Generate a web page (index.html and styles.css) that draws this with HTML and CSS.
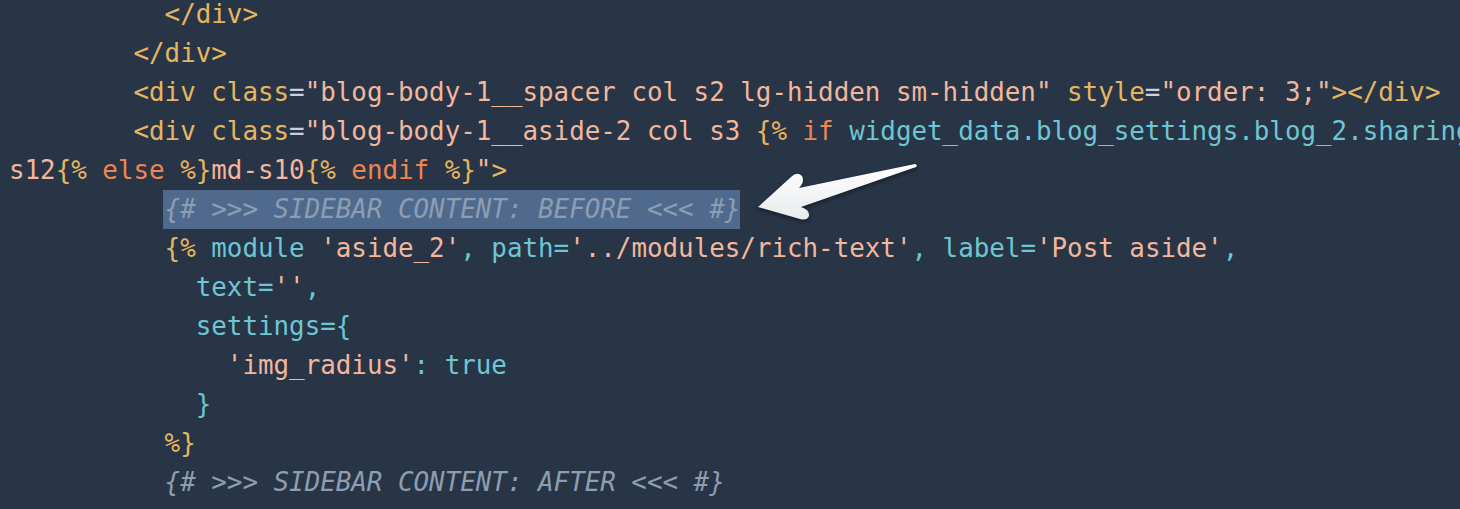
FILE: index.html
```html
<!DOCTYPE html>
<html>
<head>
<meta charset="utf-8">
<link rel="stylesheet" href="styles.css">
</head>
<body>
<div class="editor">
  <pre class="code"><div class="line">          <span class="t">&lt;/div&gt;</span></div><div class="line">        <span class="t">&lt;/div&gt;</span></div><div class="line">        <span class="t">&lt;div class</span><span class="p">=</span><span class="s">"blog-body-1__spacer col s2 lg-hidden sm-hidden"</span> <span class="t">style</span><span class="p">=</span><span class="s">"order: 3;"</span><span class="t">&gt;&lt;/div&gt;</span></div><div class="line">        <span class="t">&lt;div class</span><span class="p">=</span><span class="s">"blog-body-1__aside-2 col s3 </span><span class="t">{%</span><span class="k"> if </span><span class="c">widget_data.blog_settings.blog_2.sharing_enabled %}md-</span></div><div class="line"><span class="s">s12</span><span class="t">{%</span><span class="k"> else </span><span class="t">%}</span><span class="s">md-s10</span><span class="t">{%</span><span class="k"> endif </span><span class="t">%}</span><span class="s">"</span><span class="t">&gt;</span></div><div class="line">          <span class="cm hl">{# &gt;&gt;&gt; SIDEBAR CONTENT: BEFORE &lt;&lt;&lt; #}</span></div><div class="line">          <span class="t">{%</span><span class="c"> module </span><span class="s">'aside_2'</span><span class="c">, path=</span><span class="s">'../modules/rich-text'</span><span class="c">, label=</span><span class="s">'Post aside'</span><span class="c">,</span></div><div class="line">            <span class="c">text=</span><span class="s">''</span><span class="c">,</span></div><div class="line">            <span class="c">settings={</span></div><div class="line">              <span class="s">'img_radius'</span><span class="c">: true</span></div><div class="line">            <span class="c">}</span></div><div class="line">          <span class="t">%}</span></div><div class="line">          <span class="cm">{# &gt;&gt;&gt; SIDEBAR CONTENT: AFTER &lt;&lt;&lt; #}</span></div></pre>
  <svg class="arrow" width="1460" height="509" viewBox="0 0 1460 509" aria-hidden="true">
    <defs>
      <linearGradient id="ag" x1="0" y1="0" x2="0" y2="1">
        <stop offset="0" stop-color="#ffffff"/>
        <stop offset="1" stop-color="#e9ebee"/>
      </linearGradient>
    </defs>
    <path d="M758,207 L791,177 Q797,171 802,176 Q805,182 799,188 L915,164 Q918,165 916,167 L801,207 Q810,210 809,216 Q807,221 800,219 Z" fill="url(#ag)"/>
  </svg>
</div>
</body>
</html>
```
FILE: styles.css
```css
html, body {
  margin: 0;
  padding: 0;
  background: #273547;
  overflow: hidden;
}
.editor {
  position: relative;
  width: 1460px;
  height: 509px;
  overflow: hidden;
  background: #273547;
}
.code {
  margin: -5px 0 0 0;
  padding: 0 0 0 9px;
  font-family: "DejaVu Sans Mono", "Liberation Mono", monospace;
  font-size: 25.85px;
  line-height: 39px;
  color: #c9d1da;
}
.line {
  height: 39px;
  white-space: pre;
  overflow: hidden;
}
.t { color: #e7b55f; }
.p { color: #c9d1da; }
.s { color: #f3b79b; }
.k { color: #ef8650; }
.c { color: #6ec6d3; }
.cm {
  color: #8d9db2;
  font-style: italic;
}
.hl {
  background: #4f6a8d;
  display: inline-block;
  height: 40px;
  padding-left: 2px;
  margin-left: -2px;
}
.arrow {
  position: absolute;
  left: 0;
  top: 0;
  filter: drop-shadow(0 2px 2px rgba(0,0,0,0.45));
}
```
